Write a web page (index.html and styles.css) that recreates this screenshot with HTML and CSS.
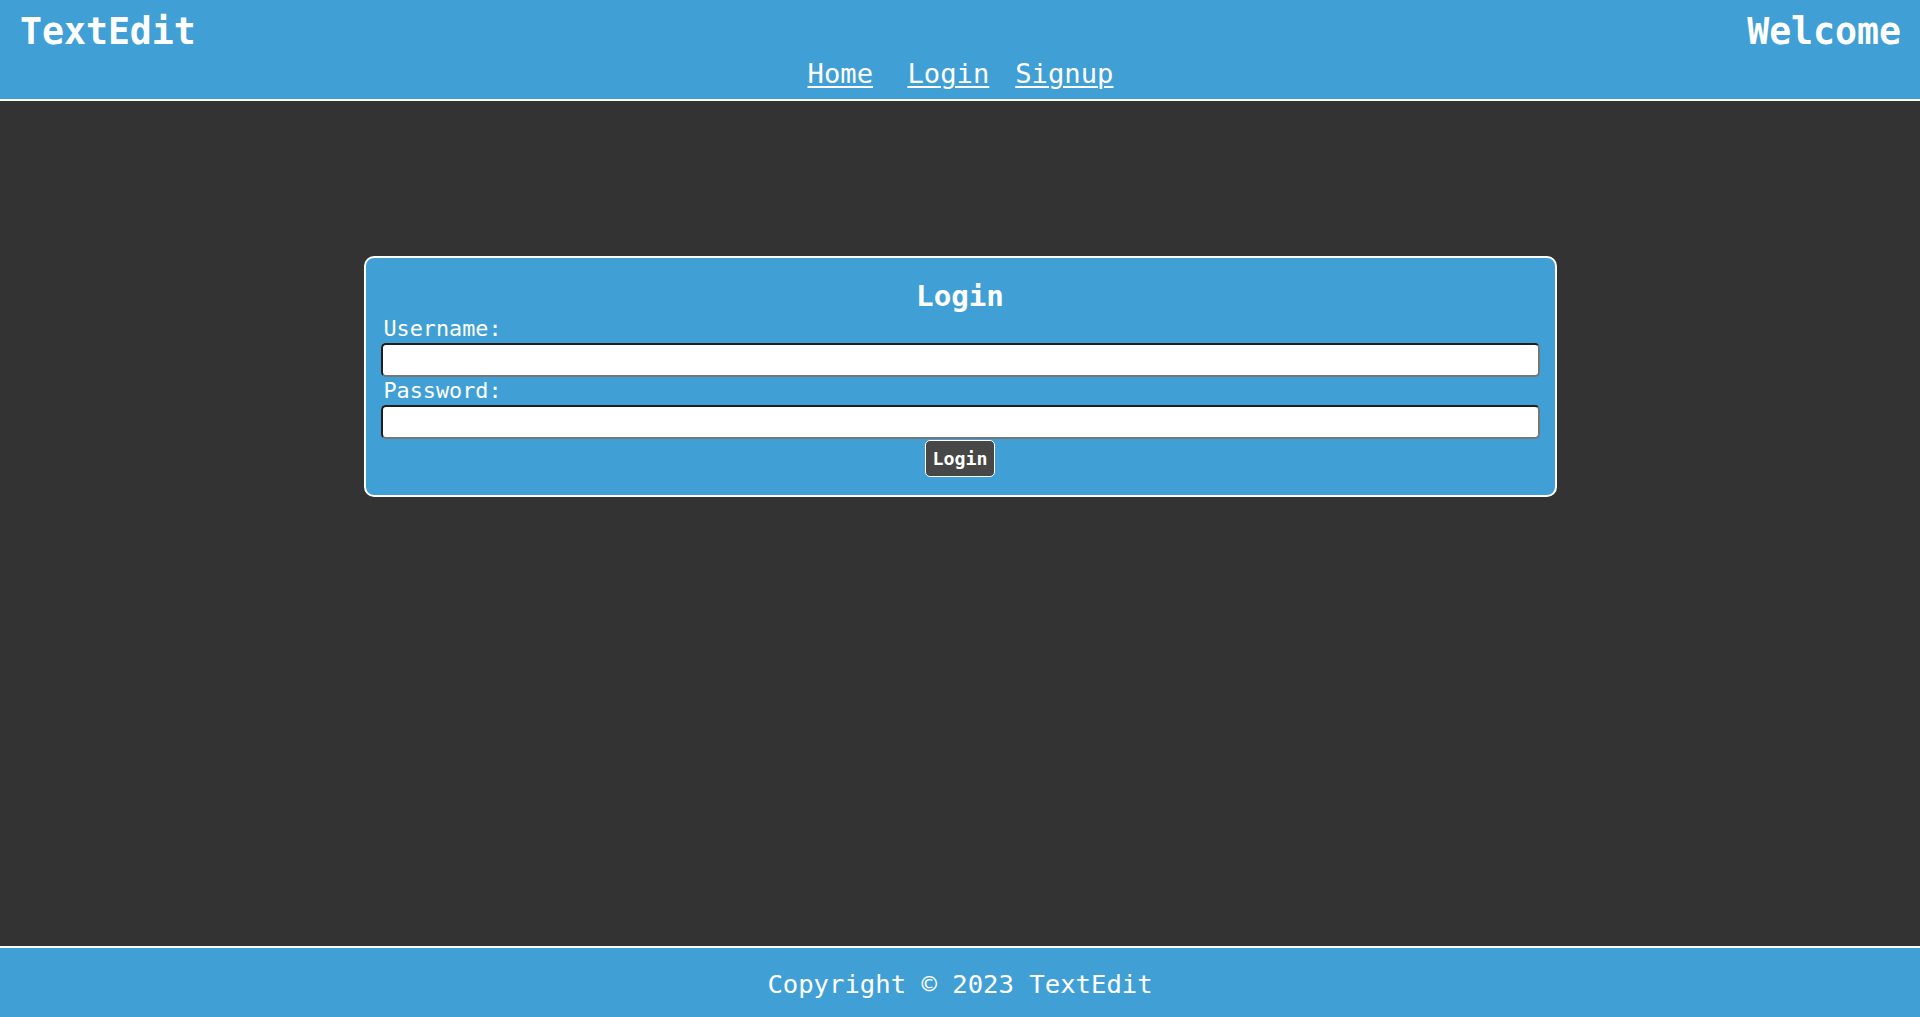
FILE: index.html
```html
<!DOCTYPE html>
<html lang="en">
<head>
<meta charset="utf-8">
<title>TextEdit - Login</title>
<link rel="stylesheet" href="styles.css">
</head>
<body>
<header class="site-header">
  <div class="header-top">
    <h1 class="brand">TextEdit</h1>
    <div class="welcome">Welcome</div>
  </div>
  <nav class="nav">
    <a href="#" class="nav-link nav-home">Home</a>
    <a href="#" class="nav-link nav-login">Login</a>
    <a href="#" class="nav-link">Signup</a>
  </nav>
</header>
<main class="main">
  <form class="card" onsubmit="return false;">
    <h2 class="card-title">Login</h2>
    <label class="field-label" for="username">Username:</label>
    <input class="field-input" id="username" type="text">
    <label class="field-label field-label-2" for="password">Password:</label>
    <input class="field-input" id="password" type="password">
    <div class="actions">
      <button class="btn" type="submit">Login</button>
    </div>
  </form>
</main>
<footer class="site-footer">Copyright © 2023 TextEdit</footer>
</body>
</html>
```
FILE: styles.css
```css
* { box-sizing: border-box; }
html, body { margin: 0; padding: 0; }
body {
  font-family: "DejaVu Sans Mono", "Liberation Mono", monospace;
  background: #333333;
  color: #ffffff;
  min-height: 100vh;
  display: flex;
  flex-direction: column;
}
.site-header {
  background: #40a0d6;
  border-bottom: 2px solid #ffffff;
  padding: 10px 19px 6px 20px;
  height: 101px;
}
.header-top {
  display: flex;
  justify-content: space-between;
  align-items: center;
  height: 44px;
}
.brand, .welcome {
  margin: 0;
  font-size: 36.5px;
  font-weight: bold;
  line-height: 44px;
}
.nav {
  display: flex;
  justify-content: center;
  height: 39px;
  line-height: 39px;
  font-size: 27.2px;
}
.nav-link {
  color: #ffffff;
  text-decoration: underline;
  text-underline-offset: 3px;
  text-decoration-thickness: 1.5px;
}
.nav-home { margin-right: 34.4px; }
.nav-login { margin-right: 26px; }
.main {
  flex: 1;
  padding-top: 155px;
}
.card {
  width: 1193px;
  margin: 0 auto;
  background: #40a0d6;
  border: 2px solid #ffffff;
  border-radius: 10px;
  padding: 19px 15px 18px 15px;
  display: flex;
  flex-direction: column;
}
.card-title {
  margin: 0;
  text-align: center;
  font-size: 29.2px;
  font-weight: bold;
  line-height: 38px;
  height: 38px;
}
.field-label {
  display: block;
  font-size: 21.8px;
  line-height: 28px;
  height: 28px;
  padding-left: 3px;
}
.field-input {
  display: block;
  width: 100%;
  height: 34px;
  margin: 0;
  background: #ffffff;
  border: 2px solid;
  border-color: #1f1f1f #767676 #767676 #1f1f1f;
  border-radius: 5px;
  padding: 2px 6px;
  font-family: inherit;
  font-size: 16px;
}
.actions {
  display: flex;
  justify-content: center;
  margin-top: 1px;
}
.btn {
  height: 37px;
  padding: 0 6.5px;
  background: #474747;
  color: #ffffff;
  border: 1px solid #ffffff;
  border-radius: 5px;
  font-family: inherit;
  font-size: 18.3px;
  font-weight: bold;
  line-height: 35px;
}
.site-footer {
  background: #40a0d6;
  border-top: 2px solid #ffffff;
  height: 71px;
  padding-top: 4px;
  text-align: center;
  font-size: 25.6px;
  line-height: 65px;
}
```
